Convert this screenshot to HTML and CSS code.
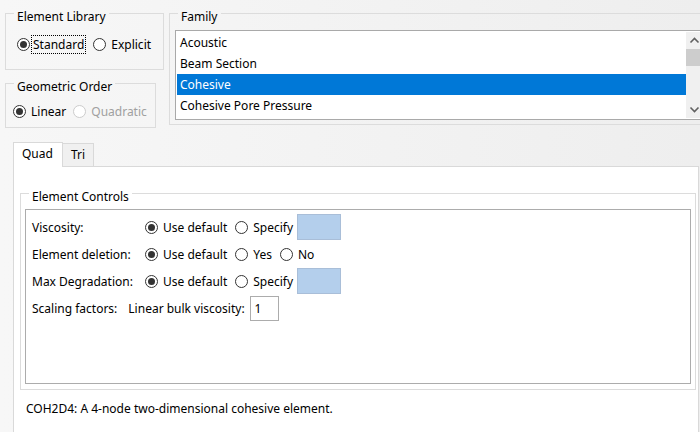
FILE: index.html
```html
<!DOCTYPE html>
<html lang="en">

<head>
    <meta charset="UTF-8">
    <title>Element Type</title>
    <link rel="stylesheet" href="styles.css">
</head>

<body>
    <div class="top">
        <div class="left-col">
            <fieldset class="group lib-group">
                <legend>Element Library</legend>
                <div class="radio-row">
                    <label class="radio checked"><span class="dot"></span><span class="focus">Standard</span></label>
                    <label class="radio"><span class="dot"></span>Explicit</label>
                </div>
            </fieldset>
            <fieldset class="group order-group">
                <legend>Geometric Order</legend>
                <div class="radio-row">
                    <label class="radio checked"><span class="dot"></span>Linear</label>
                    <label class="radio disabled"><span class="dot"></span>Quadratic</label>
                </div>
            </fieldset>
        </div>
        <fieldset class="group family-group">
            <legend>Family</legend>
            <div class="listbox">
                <ul class="items">
                    <li>Acoustic</li>
                    <li>Beam Section</li>
                    <li class="selected">Cohesive</li>
                    <li>Cohesive Pore Pressure</li>
                </ul>
                <div class="scrollbar">
                    <svg class="arrow" width="17" height="17" viewBox="0 0 17 17">
                        <path d="M4.5 10.5 L8.5 6.5 L12.5 10.5" fill="none" stroke="#606060" stroke-width="1.6"/>
                    </svg>
                    <div class="thumb"></div>
                    <div class="track"></div>
                    <svg class="arrow" width="17" height="17" viewBox="0 0 17 17">
                        <path d="M4.5 6.5 L8.5 10.5 L12.5 6.5" fill="none" stroke="#606060" stroke-width="1.6"/>
                    </svg>
                </div>
            </div>
        </fieldset>
    </div>

    <div class="tabs">
        <div class="tab active">Quad</div>
        <div class="tab">Tri</div>
    </div>

    <div class="panel">
        <fieldset class="group controls-group">
            <legend>Element Controls</legend>
            <div class="controls">
                <div class="row">
                    <span class="row-label">Viscosity:</span>
                    <label class="radio checked"><span class="dot"></span>Use default</label>
                    <label class="radio"><span class="dot"></span>Specify</label>
                    <span class="value-box"></span>
                </div>
                <div class="row">
                    <span class="row-label">Element deletion:</span>
                    <label class="radio checked"><span class="dot"></span>Use default</label>
                    <label class="radio"><span class="dot"></span>Yes</label>
                    <label class="radio"><span class="dot"></span>No</label>
                </div>
                <div class="row">
                    <span class="row-label">Max Degradation:</span>
                    <label class="radio checked"><span class="dot"></span>Use default</label>
                    <label class="radio"><span class="dot"></span>Specify</label>
                    <span class="value-box"></span>
                </div>
                <div class="row">
                    <span class="scale-label">Scaling factors:</span>
                    <span class="sub-label">Linear bulk viscosity:</span>
                    <span class="num-box">1</span>
                </div>
            </div>
        </fieldset>
        <p class="desc">COH2D4: A 4-node two-dimensional cohesive element.</p>
    </div>
</body>

</html>
```

FILE: styles.css
```css
body {
    margin: 0;
    height: 432px;
    overflow: hidden;
    display: flex;
    flex-direction: column;
    font-family: "Noto Sans", Arial, sans-serif;
    font-size: 12px;
    color: #000;
    background: linear-gradient(to right, #f7f7f7, #eeeeee);
}

/* group boxes */
.group {
    margin: 0;
    padding: 0;
    border: 1px solid #dcdcdc;
    box-sizing: border-box;
    min-width: 0;
}

.group legend {
    margin-left: 8px;
    padding: 8px 3px 0;
    line-height: 16px;
}

.top {
    display: flex;
    align-items: flex-start;
    padding-left: 5px;
    padding-top: 1px;
    overflow: hidden;
    flex-shrink: 0;
}

.left-col {
    display: flex;
    flex-direction: column;
    gap: 1px;
    flex-shrink: 0;
}

.lib-group {
    width: 159px;
    height: 69px;
}

.lib-group .radio-row {
    margin: 9px 0 0 11px;
}

.order-group {
    width: 151px;
    height: 57px;
}

.order-group .radio-row {
    margin: 6px 0 0 7px;
}

.radio-row {
    display: flex;
    gap: 7px;
    height: 20px;
    align-items: center;
}

/* radio buttons */
.radio {
    display: inline-flex;
    align-items: center;
    gap: 5px;
    white-space: nowrap;
}

.dot {
    width: 13px;
    height: 13px;
    border: 1px solid #333;
    border-radius: 50%;
    box-sizing: border-box;
    background: #fff;
    display: inline-flex;
    align-items: center;
    justify-content: center;
}

.radio.checked .dot::after {
    content: "";
    width: 7px;
    height: 7px;
    border-radius: 50%;
    background: #333;
}

.radio.disabled {
    color: #a0a0a0;
}

.radio.disabled .dot {
    border-color: #cccccc;
}

.focus {
    border: 1px dotted #000;
    padding: 0 1px;
    margin-left: -4px;
    line-height: 17px;
}

/* family list */
.family-group {
    width: 545px;
    height: 124px;
    margin-left: 5px;
    flex-shrink: 0;
}

.listbox {
    display: flex;
    height: 90px;
    width: 530px;
    margin: 5px 0 0 5px;
    box-sizing: border-box;
    border: 1px solid #a9a9a9;
    padding: 1px;
    background: #fff;
}

.items {
    list-style: none;
    margin: 0;
    padding: 0;
    flex: 1;
}

.items li {
    height: 21px;
    line-height: 21px;
    padding-left: 3px;
}

.items li.selected {
    background: #0078d7;
    color: #fff;
}

.scrollbar {
    width: 17px;
    background: #f0f0f0;
    display: flex;
    flex-direction: column;
}

.arrow {
    display: block;
    flex-shrink: 0;
}

.thumb {
    height: 17px;
    background: #cdcdcd;
}

.track {
    flex: 1;
}

/* tabs */
.tabs {
    display: flex;
    align-items: flex-end;
    height: 24px;
    margin-top: 14px;
    padding-left: 13px;
    flex-shrink: 0;
}

.tab {
    height: 23px;
    line-height: 22px;
    padding: 0 8px;
    border: 1px solid #d9d9d9;
    border-bottom: none;
    box-sizing: border-box;
    background: #f0f0f0;
}

.tab + .tab {
    border-left: none;
}

.tab.active {
    height: 25px;
    margin-bottom: -1px;
    padding: 0 9px 0 8px;
    background: #fff;
    position: relative;
    z-index: 1;
}

.panel {
    flex: 1;
    margin-left: 13px;
    width: 686px;
    box-sizing: border-box;
    border: 1px solid #d9d9d9;
    border-bottom: none;
    background: #fff;
}

.controls-group {
    width: 676px;
    height: 209px;
    margin: 14px 0 0 6px;
}

.controls {
    width: 666px;
    height: 175px;
    margin: 4px 0 0 4px;
    box-sizing: border-box;
    border: 1px solid #acacac;
    padding: 4px 0 0 6px;
    display: flex;
    flex-direction: column;
    gap: 1px;
}

.row {
    display: flex;
    align-items: center;
    height: 26px;
}

.row .radio {
    margin-right: 8px;
}

.row-label {
    width: 113px;
    flex-shrink: 0;
}

.value-box {
    width: 44px;
    height: 26px;
    box-sizing: border-box;
    border: 1px solid #a9bed8;
    background: #b4cfec;
    margin-left: -4px;
}

.scale-label {
    margin-right: 11px;
}

.sub-label {
    margin-right: 5px;
}

.num-box {
    width: 29px;
    height: 25px;
    box-sizing: border-box;
    border: 1px solid #acacac;
    padding-left: 4px;
    line-height: 23px;
}

.desc {
    margin: 11px 0 0 12px;
    line-height: 16px;
}
```
